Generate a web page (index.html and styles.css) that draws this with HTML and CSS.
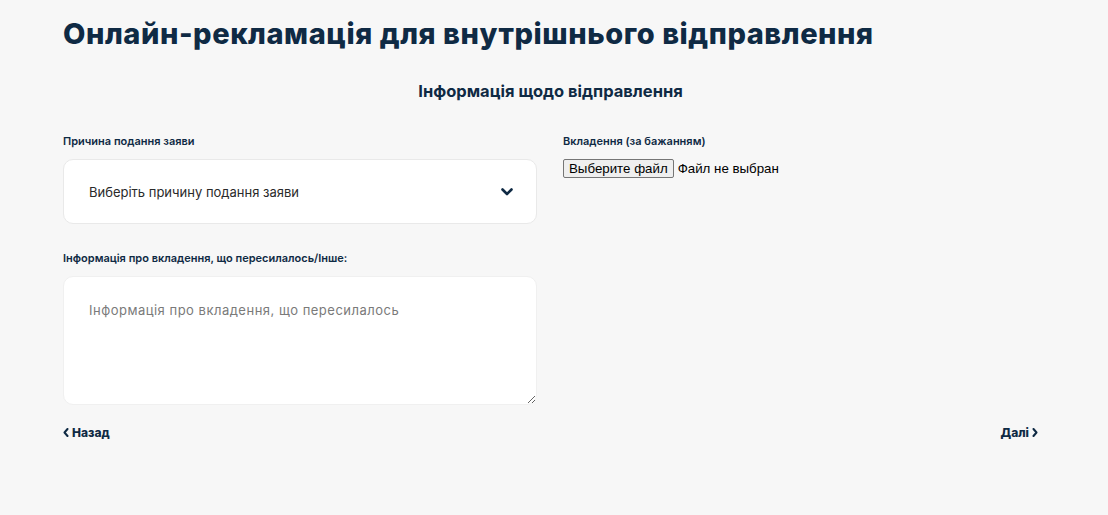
FILE: index.html
```html
<!DOCTYPE html>
<html lang="uk">

<head>
    <meta charset="UTF-8">
    <meta name="viewport" content="width=device-width, initial-scale=1.0">
    <title>Онлайн-рекламація</title>
    <link rel="stylesheet" href="styles.css">
</head>

<body>
    <main class="page">
        <h1 class="title">Онлайн-рекламація для внутрішнього відправлення</h1>
        <h2 class="subtitle">Інформація щодо відправлення</h2>

        <div class="form-grid">
            <div class="col">
                <div class="field">
                    <label class="label" for="reason">Причина подання заяви</label>
                    <div class="select-box">
                        <select id="reason" class="select">
                            <option>Виберіть причину подання заяви</option>
                        </select>
                        <svg class="chevron" width="12" height="8" viewBox="0 0 12 8">
                            <path d="M1.5 1.5 L6 6 L10.5 1.5" fill="none" stroke="#0f2a44" stroke-width="2.6" stroke-linecap="round" stroke-linejoin="round" />
                        </svg>
                    </div>
                </div>
                <div class="field">
                    <label class="label" for="info">Інформація про вкладення, що пересилалось/Інше:</label>
                    <textarea id="info" class="textarea" placeholder="Інформація про вкладення, що пересилалось"></textarea>
                </div>
            </div>
            <div class="col">
                <div class="field">
                    <label class="label" for="file">Вкладення (за бажанням)</label>
                    <div class="file-row">
                        <button class="file-btn" type="button">Выберите файл</button>
                        <span class="file-name">Файл не выбран</span>
                    </div>
                </div>
            </div>
        </div>

        <div class="nav-row">
            <a class="nav-link" href="#">
                <svg width="6" height="9" viewBox="0 0 6 9"><path d="M4.5 1 L1.5 4.5 L4.5 8" fill="none" stroke="#0f2a44" stroke-width="2" stroke-linecap="round" stroke-linejoin="round" /></svg>
                Назад
            </a>
            <a class="nav-link" href="#">
                Далі
                <svg width="6" height="9" viewBox="0 0 6 9"><path d="M1.5 1 L4.5 4.5 L1.5 8" fill="none" stroke="#0f2a44" stroke-width="2" stroke-linecap="round" stroke-linejoin="round" /></svg>
            </a>
        </div>
    </main>
</body>

</html>
```

FILE: styles.css
```css
* {
    margin: 0;
    padding: 0;
    box-sizing: border-box;
}

body {
    background-color: #f7f7f7;
    font-family: Inter, "Noto Sans", sans-serif;
    color: #0f2a44;
}

.page {
    width: 975px;
    margin-left: 63px;
    padding-top: 16px;
}

.title {
    font-size: 29px;
    font-weight: 800;
    letter-spacing: 0.55px;
    line-height: 36px;
    color: #0f2a44;
}

.subtitle {
    text-align: center;
    font-size: 16.5px;
    font-weight: 700;
    margin-top: 28px;
    line-height: 22px;
}

.form-grid {
    display: grid;
    grid-template-columns: 474px 475px;
    gap: 26px;
    margin-top: 31px;
}

.field {
    display: flex;
    flex-direction: column;
    margin-bottom: 26px;
}

.col .field:last-child {
    margin-bottom: 20px;
}

.label {
    font-size: 11px;
    font-weight: 600;
    line-height: 16px;
    margin-bottom: 10px;
    color: #0f2a44;
}

.select-box {
    position: relative;
    height: 65px;
    background: #fff;
    border: 1px solid #e9e9e9;
    border-radius: 10px;
}

.select {
    appearance: none;
    width: 100%;
    height: 100%;
    border: none;
    background: transparent;
    padding-left: 25px;
    font-family: Inter, "Noto Sans", sans-serif;
    font-size: 13px;
    color: #2a2a2a;
}

.chevron {
    position: absolute;
    right: 23px;
    top: 28px;
}

.textarea {
    height: 129px;
    background: #fff;
    border: 1px solid #f0f0f0;
    border-radius: 10px;
    padding: 25px 25px;
    font-family: Inter, "Noto Sans", sans-serif;
    font-size: 13px;
    letter-spacing: 0.5px;
    color: #2a2a2a;
    resize: vertical;
}

.textarea::placeholder {
    color: #7a7a7a;
}

.file-row {
    display: flex;
    align-items: center;
    gap: 4px;
    font-family: Arial, "Liberation Sans", sans-serif;
    font-size: 13.3px;
    color: #000;
}

.file-btn {
    font-family: Arial, "Liberation Sans", sans-serif;
    font-size: 13.3px;
    padding: 1px 5px;
    border: 1px solid #767676;
    border-radius: 2px;
    background: #efefef;
    color: #000;
}

.nav-row {
    display: flex;
    justify-content: space-between;
}

.nav-link {
    display: flex;
    align-items: center;
    gap: 3px;
    font-size: 12px;
    font-weight: 800;
    color: #0f2a44;
    text-decoration: none;
}
```
